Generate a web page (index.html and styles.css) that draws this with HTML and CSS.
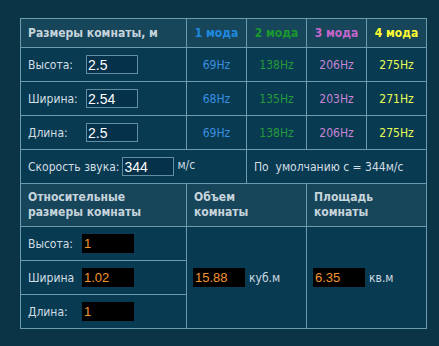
FILE: index.html
```html
<!DOCTYPE html>
<html lang="ru">
<head>
<meta charset="utf-8">
<title>Размеры комнаты</title>
<link rel="stylesheet" href="styles.css">
</head>
<body>
<div class="calc">
  <div class="cell head title">Размеры комнаты, м</div>
  <div class="cell head mode m1">1 мода</div>
  <div class="cell head mode m2">2 мода</div>
  <div class="cell head mode m3">3 мода</div>
  <div class="cell head mode m4">4 мода</div>

  <div class="cell"><span class="lbl">Высота:</span><input class="inp" value="2.5"></div>
  <div class="cell hz m1">69Hz</div>
  <div class="cell hz m2">138Hz</div>
  <div class="cell hz m3">206Hz</div>
  <div class="cell hz m4">275Hz</div>

  <div class="cell"><span class="lbl">Ширина:</span><input class="inp" value="2.54"></div>
  <div class="cell hz m1">68Hz</div>
  <div class="cell hz m2">135Hz</div>
  <div class="cell hz m3">203Hz</div>
  <div class="cell hz m4">271Hz</div>

  <div class="cell"><span class="lbl">Длина:</span><input class="inp" value="2.5"></div>
  <div class="cell hz m1">69Hz</div>
  <div class="cell hz m2">138Hz</div>
  <div class="cell hz m3">206Hz</div>
  <div class="cell hz m4">275Hz</div>

  <div class="cell span2 speed"><span class="speed-lbl">Скорость звука:</span><input class="inp" value="344"><span class="unit up">м/с</span></div>
  <div class="cell span3 default">По&nbsp; умолчанию с = 344м/с</div>

  <div class="cell head sub">Относительные<br>размеры комнаты</div>
  <div class="cell head sub span2">Объем<br>комнаты</div>
  <div class="cell head sub span2">Площадь<br>комнаты</div>

  <div class="rel">
    <div class="cell"><span class="lbl2">Высота:</span><output class="res">1</output></div>
    <div class="cell"><span class="lbl2">Ширина</span><output class="res">1.02</output></div>
    <div class="cell"><span class="lbl2">Длина:</span><output class="res">1</output></div>
  </div>
  <div class="cell span2 result"><output class="res">15.88</output><span class="unit">куб.м</span></div>
  <div class="cell span2 result"><output class="res">6.35</output><span class="unit">кв.м</span></div>
</div>
</body>
</html>
```

FILE: styles.css
```css
html, body {
  margin: 0;
  background: #0b3447;
}
body {
  padding: 18px 0 0 20px;
  font-family: "DejaVu Sans Condensed", "DejaVu Sans", sans-serif;
  font-size: 12px;
  color: #d3dee4;
}
.calc {
  display: grid;
  width: max-content;
  grid-template-columns: 165px 59px 59px 59px 59px;
  grid-template-rows: 28px 33px 33px 33px 33px 42px 101px;
  gap: 1px;
  padding: 1px;
  background: #6b9cad;
}
.cell {
  background: #083a51;
  display: flex;
  align-items: center;
  padding: 0 0 0 7px;
  white-space: nowrap;
}
.head {
  background: #17455a;
  font-weight: bold;
  color: #c6d4dc;
}
.mode, .hz {
  justify-content: center;
  padding: 0;
}
.mode.m1 { color: #1f8ae0; }
.mode.m2 { color: #19992e; }
.mode.m3 { color: #c565cc; }
.mode.m4 { color: #ffff2e; }
.hz.m1 { color: #3b8fe0; }
.hz.m2 { color: #259a3c; }
.hz.m3 { color: #c884d6; }
.hz.m4 { color: #eaff55; }
.span2 { grid-column: span 2; }
.span3 { grid-column: span 3; }
.lbl {
  display: inline-block;
  width: 58px;
}
.lbl2 {
  display: inline-block;
  width: 54px;
}
.speed-lbl {
  margin-right: 3px;
}
.inp {
  box-sizing: border-box;
  width: 52px;
  height: 19px;
  margin: 0;
  padding: 0 0 0 1px;
  border: 1px solid #5f8fa0;
  background: #06314a;
  color: #ffffff;
  font-family: "Liberation Sans", Arial, sans-serif;
  font-size: 14px;
  outline: none;
}
.unit {
  margin-left: 4px;
  color: #cfdbe2;
}
.up {
  margin-left: 3px;
  align-self: flex-start;
  margin-top: 8px;
}
.default {
  padding-left: 7px;
}
.sub {
  line-height: 15px;
  align-items: center;
}
.rel {
  display: grid;
  grid-template-rows: 33px 33px 33px;
  gap: 1px;
}
.res {
  box-sizing: border-box;
  display: inline-block;
  width: 52px;
  height: 19px;
  line-height: 19px;
  padding-left: 2px;
  background: #000000;
  color: #f29530;
  font-family: "Liberation Sans", Arial, sans-serif;
  font-size: 13px;
}
.result {
  padding-left: 6px;
}
.result .unit {
  margin-left: 4px;
}
```
